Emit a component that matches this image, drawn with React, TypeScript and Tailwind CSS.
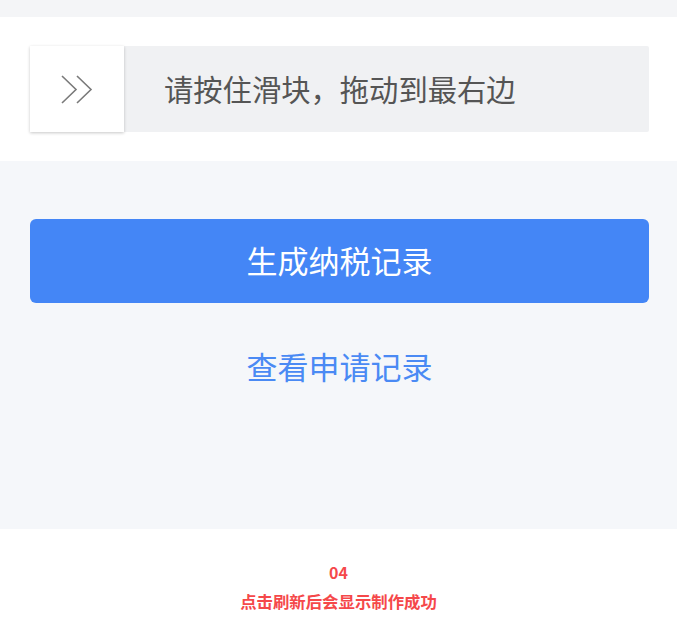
const cjk = { fontFamily: '"Noto Sans CJK SC", "Noto Sans", sans-serif' };

function SliderVerify() {
  return (
    <div className="bg-white pl-[30px] pr-[28px] pt-[29px] pb-[29px]">
      <div className="flex h-[86px] items-stretch rounded-r-[2px] bg-[#f0f1f3]">
        <div className="flex w-[94px] shrink-0 items-center justify-center bg-white shadow-[0_1px_3px_rgba(0,0,0,0.22)]">
          <svg width="32" height="29" viewBox="0 0 32 29" fill="none" stroke="#7a7a7a" strokeWidth="1.6">
            <polyline points="1,1 15,14.5 1,28" />
            <polyline points="16,1 30,14.5 16,28" />
          </svg>
        </div>
        <div className="flex items-center pl-[40px] text-[29.3px] text-[#555555]" style={cjk}>
          请按住滑块，拖动到最右边
        </div>
      </div>
    </div>
  );
}

export default function App() {
  return (
    <div className="w-[677px] h-[644px] flex flex-col bg-white" style={cjk}>
      <div className="h-[17px] bg-[#f4f5f7]" />
      <SliderVerify />
      <div className="h-[368px] bg-[#f5f7fa] pl-[30px] pr-[28px] pt-[58px]">
        <button className="flex h-[84px] w-full items-center justify-center rounded-[6px] bg-[#4486f6] pb-[2px] text-[31px] text-white">
          生成纳税记录
        </button>
        <div className="mt-[42px] text-center text-[31px] leading-[42px] text-[#4a8af4]">查看申请记录</div>
      </div>
      <div className="flex flex-1 flex-col items-center pt-[32px] font-bold text-[#f5484a]">
        <div className="text-[16px] leading-[22px]">04</div>
        <div className="mt-[7px] text-[16.4px] leading-[22px]">点击刷新后会显示制作成功</div>
      </div>
    </div>
  );
}
